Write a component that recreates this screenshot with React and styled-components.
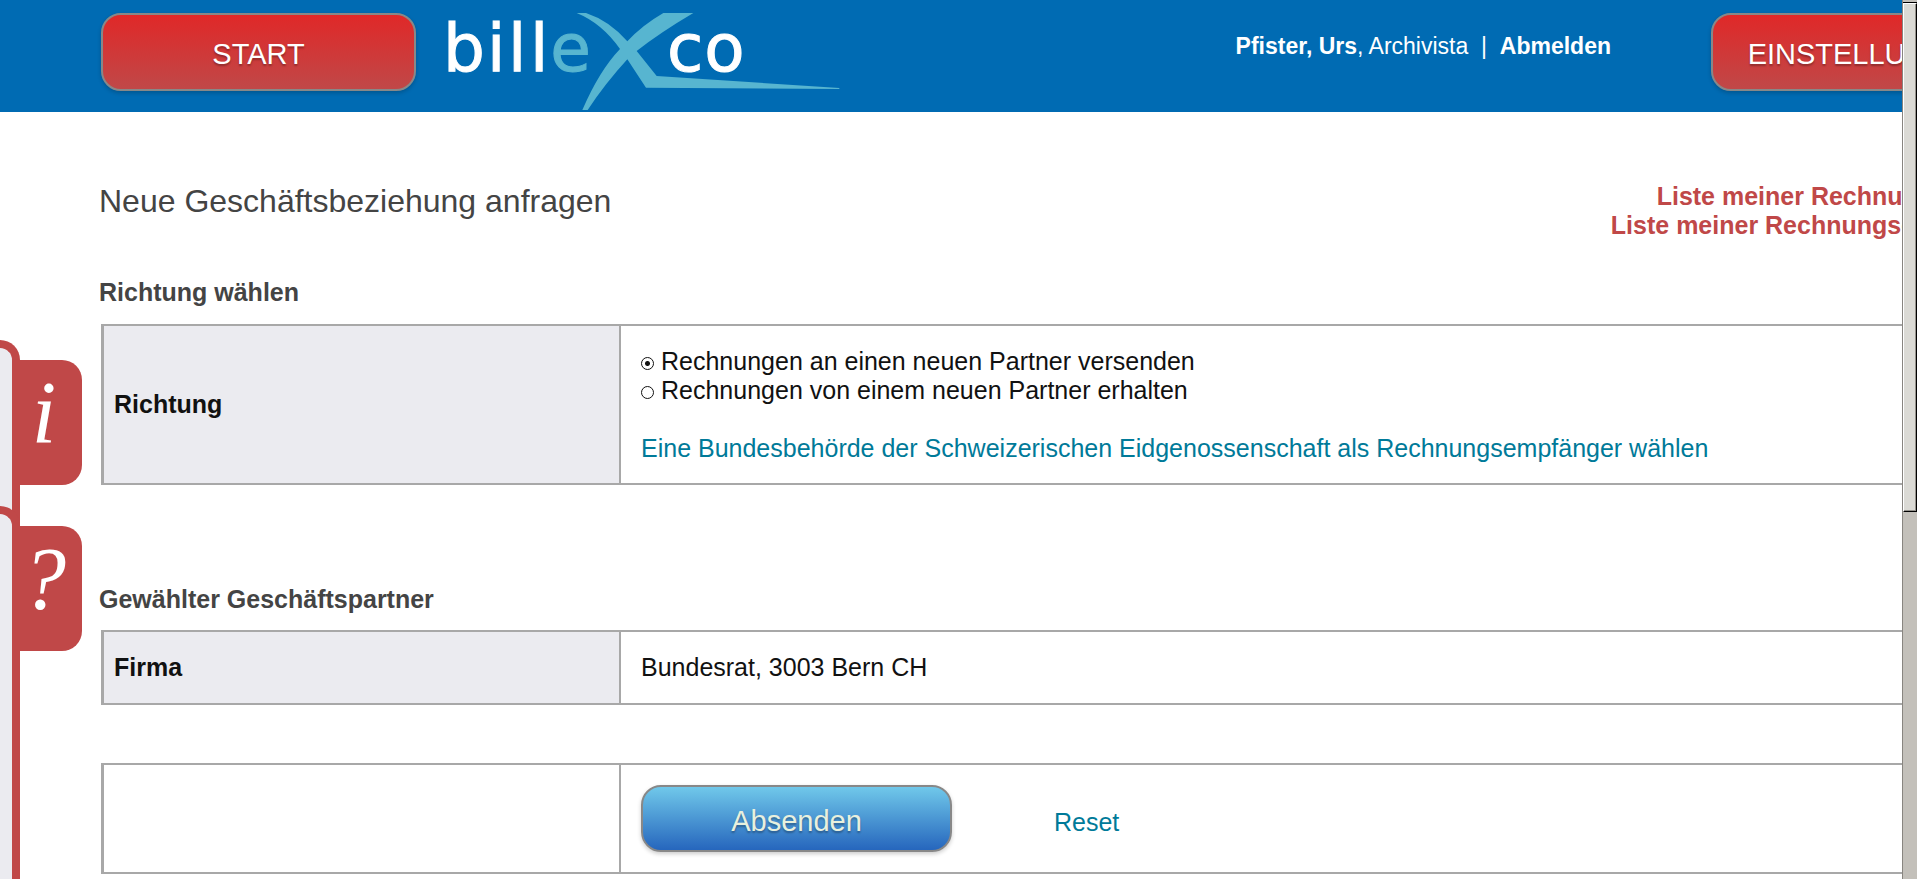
import React from "react";
import styled, { createGlobalStyle } from "styled-components";

const GlobalStyle = createGlobalStyle`
  *, *::before, *::after { box-sizing: border-box; }
  body {
    margin: 0;
    background: #fff;
    color: #111;
    font: 25px/29px "Liberation Sans", Arial, sans-serif;
  }
`;

const Shell = styled.div`
  display: flex;
  height: 100vh;
  overflow: hidden;
`;

const Viewport = styled.div`
  position: relative;
  flex: 1;
  min-width: 0;
  overflow: hidden;
`;

const Page = styled.div`
  min-width: 2127px;
`;

const Header = styled.header`
  display: flex;
  align-items: flex-start;
  height: 112px;
  padding: 0 101px;
  background: #006bb3;
`;

const Button = styled.button`
  width: ${(p) => (p.$primary ? "311px" : "315px")};
  height: ${(p) => (p.$primary ? "67px" : "78px")};
  margin: ${(p) => (p.$primary ? "0" : "13px 0 0")};
  padding: ${(p) => (p.$primary ? "6px" : "4px")} 0 0;
  border: 2px solid #888;
  border-radius: 20px;
  background: ${(p) =>
    p.$primary
      ? "linear-gradient(#70c8ea, #2666bd)"
      : "linear-gradient(#e02828, #c04848)"};
  box-shadow: 0 2px 4px rgba(0, 0, 0, 0.2);
  color: ${(p) => (p.$primary ? "#e8f0de" : "#fff")};
  font: 29px/33px "Liberation Sans", Arial, sans-serif;
  text-shadow: 0 2px 2px rgba(0, 0, 0, 0.3);
`;

const Logo = styled.svg`
  width: 420px;
  height: 112px;
  margin-left: 14px;
`;

const User = styled.div`
  margin: 32px 100px 0 auto;
  color: #fff;
  font-size: 23px;
  line-height: 28px;
  white-space: pre;

  a {
    color: inherit;
    font-weight: bold;
    text-decoration: none;
  }
`;

const Main = styled.main`
  padding: 70px 98px 0 99px;
`;

const TitleRow = styled.div`
  display: flex;
  justify-content: space-between;
  align-items: flex-start;
`;

const Title = styled.h1`
  margin: 0;
  color: #444;
  font-size: 32px;
  font-weight: normal;
  line-height: 38px;
`;

const ListLinks = styled.nav`
  display: flex;
  flex-direction: column;
  align-items: flex-end;

  a {
    color: #c04848;
    font-weight: bold;
    text-decoration: none;
  }
`;

const SectionTitle = styled.h2`
  margin: ${(p) => (p.$first ? "38px" : "100px")} 0 ${(p) => (p.$first ? "17px" : "16px")};
  color: #444;
  font-size: 25px;
`;

const Table = styled.table`
  width: calc(100% - 2px);
  margin: ${(p) => (p.$spaced ? "58px" : "0")} 0 0 2px;
  border: 2px solid #a8a8a8;
  border-left-width: 3px;
  border-spacing: 0;
  table-layout: fixed;
`;

const Label = styled.th`
  width: 517px;
  padding: 0 10px;
  border-right: 2px solid #a8a8a8;
  background: ${(p) => (p.$blank ? "transparent" : "#ebebf0")};
  text-align: left;
`;

const Cell = styled.td`
  height: ${(p) => (p.$tall ? "157px" : "71px")};
  padding: 20px;
`;

const Option = styled.label`
  display: flex;
  align-items: center;
  gap: 7px;
`;

const Radio = styled.input`
  appearance: none;
  width: 13px;
  height: 13px;
  margin: 4px 0 0;
  border: 1px solid #111;
  border-radius: 50%;

  &:checked {
    background: radial-gradient(circle, #111 0 2px, transparent 3px);
  }
`;

const TextLink = styled.a`
  display: inline-block;
  margin-top: ${(p) => (p.$below ? "29px" : "0")};
  color: #007a99;
  text-decoration: none;
`;

const Actions = styled.div`
  display: flex;
  align-items: baseline;
  gap: 102px;
`;

const SidePanel = styled.aside`
  position: absolute;
  top: ${(p) => p.$top};
  bottom: 0;
  left: 0;
  width: 20px;
  border: solid #c04848;
  border-width: 8px 8px 0 0;
  border-top-right-radius: 20px;
  background: #ebebf0;
`;

const SideTab = styled.button`
  position: absolute;
  top: 12px;
  left: 12px;
  display: flex;
  justify-content: center;
  width: 70px;
  height: 125px;
  padding: 0 6px 0 0;
  border: 0;
  border-radius: 0 20px 20px 0;
  background: #c04848;
  color: #fff;
  font: italic 88px/106px "Liberation Serif", "Times New Roman", serif;
`;

const ScrollTrack = styled.div`
  width: 15px;
  border-left: 1px solid #888580;
  background: #c3c0ba;
`;

const ScrollArrow = styled.div`
  height: 3px;
  border-bottom: 1px solid #000;
  background: #c3c0ba;
`;

const ScrollThumb = styled.div`
  height: 509px;
  border: 1px solid;
  border-color: #fff #000 #000 #fff;
  background: #dbdad5;
  box-shadow: inset -1px -1px #95928c;
`;

function BillexcoLogo() {
  return (
    <Logo viewBox="0 0 1260 336" role="img" aria-label="billexco">
      <g
        fontFamily="DejaVu Sans, Verdana, sans-serif"
        fontSize="198"
        strokeWidth="3"
      >
        <text x="39 171 234 300" y="213" fill="#fff" stroke="#fff">bill</text>
        <text x="361" y="213" fill="#57b5d0" stroke="#57b5d0">e</text>
        <text x="711 823" y="213" fill="#fff" stroke="#fff">co</text>
      </g>
      <path
        fill="#57b5d0"
        d="M440 39H468Q538 62 592 124Q636 76 700 39H790Q690 98 620 153L680 228L1228 264V267L648 263L592 178Q526 250 473 330H457Q508 212 570 147Q516 70 440 39Z"
      />
    </Logo>
  );
}

export default function App() {
  return (
    <Shell>
      <GlobalStyle />
      <Viewport>
        <Page>
          <Header>
            <Button type="button">START</Button>
            <BillexcoLogo />
            <User>
              <b>Pfister, Urs</b>, Archivista{"  |  "}
              <a href="#abmelden">Abmelden</a>
            </User>
            <Button type="button">EINSTELLUNGEN</Button>
          </Header>
          <Main>
            <TitleRow>
              <Title>Neue Geschäftsbeziehung anfragen</Title>
              <ListLinks>
                <a href="#sender">Liste meiner Rechnungssender</a>
                <a href="#empfaenger">Liste meiner Rechnungsempfänger</a>
              </ListLinks>
            </TitleRow>

            <SectionTitle $first>Richtung wählen</SectionTitle>
            <Table>
              <tbody>
                <tr>
                  <Label scope="row">Richtung</Label>
                  <Cell $tall>
                    <Option>
                      <Radio type="radio" name="richtung" defaultChecked />
                      Rechnungen an einen neuen Partner versenden
                    </Option>
                    <Option>
                      <Radio type="radio" name="richtung" />
                      Rechnungen von einem neuen Partner erhalten
                    </Option>
                    <TextLink href="#bund" $below>
                      Eine Bundesbehörde der Schweizerischen Eidgenossenschaft als Rechnungsempfänger wählen
                    </TextLink>
                  </Cell>
                </tr>
              </tbody>
            </Table>

            <SectionTitle>Gewählter Geschäftspartner</SectionTitle>
            <Table>
              <tbody>
                <tr>
                  <Label scope="row">Firma</Label>
                  <Cell>Bundesrat, 3003 Bern CH</Cell>
                </tr>
              </tbody>
            </Table>

            <Table $spaced>
              <tbody>
                <tr>
                  <Label as="td" $blank />
                  <Cell>
                    <Actions>
                      <Button type="submit" $primary>Absenden</Button>
                      <TextLink href="#reset">Reset</TextLink>
                    </Actions>
                  </Cell>
                </tr>
              </tbody>
            </Table>
          </Main>
        </Page>
        <SidePanel $top="340px">
          <SideTab type="button" aria-label="Information">i</SideTab>
        </SidePanel>
        <SidePanel $top="506px">
          <SideTab type="button" aria-label="Hilfe">?</SideTab>
        </SidePanel>
      </Viewport>
      <ScrollTrack>
        <ScrollArrow />
        <ScrollThumb />
      </ScrollTrack>
    </Shell>
  );
}
